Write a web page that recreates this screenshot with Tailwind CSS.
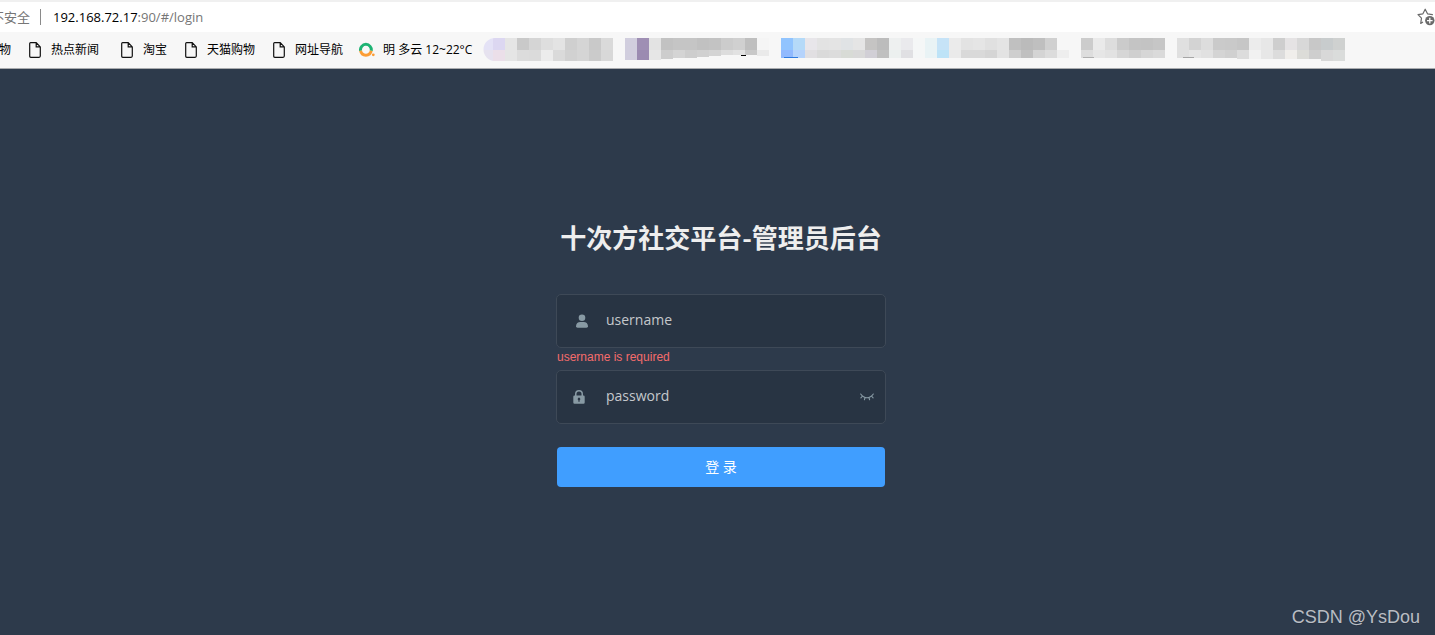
<!DOCTYPE html>
<html lang="zh-CN">

<head>
    <meta charset="UTF-8">
    <meta name="viewport" content="width=device-width, initial-scale=1.0">
    <script src="https://cdn.jsdelivr.net/npm/@tailwindcss/browser@4"></script>
    <title>十次方社交平台-管理员后台</title>
</head>

<body class="relative flex flex-col min-h-screen overflow-x-hidden bg-[#2d3a4b] font-['Open_Sans','Noto_Sans_CJK_SC',sans-serif]">

    <header>
        <!-- address bar -->
        <div class="flex items-center h-8 border-t-2 border-[#f0f0f0] bg-white text-[13px] leading-5 text-[#767676]">
            <span class="flex justify-end w-[30px] overflow-hidden whitespace-nowrap">不安全</span>
            <span class="w-px h-4 ml-[10px] mr-3 bg-[#8a8a8a]"></span>
            <a href="#/login" class="flex-1"><span class="text-black">192.168.72.17</span>:90/#/login</a>
            <button type="button" aria-label="收藏" class="shrink-0">
                <svg class="block w-[18px] h-[18px]" viewBox="0 0 18 18" fill="none">
                    <path d="M5.6 14.2 3.7 15.4 4.5 10.2 1 6.6l4.9-.8L8.2 1.2l2.3 4.6 4.9.8" stroke="#6a6a6a" stroke-width="1.2" stroke-linejoin="round" stroke-linecap="round" />
                    <circle cx="12.8" cy="12.6" r="4.7" fill="#6a6a6a" />
                    <path d="M12.8 9.8v5.6M10 12.6h5.6" stroke="#fff" stroke-width="1.3" />
                </svg>
            </button>
        </div>

        <!-- bookmarks -->
        <nav class="flex items-center h-[37px] gap-[18px] overflow-hidden border-b border-[#a9abae] bg-[#f7f7f7] text-xs text-black whitespace-nowrap">
            <a href="#" class="flex justify-end w-[11px] shrink-0">物</a>
            <a href="#" class="flex items-center gap-[10px] mr-1">
                <svg class="w-3 h-4" viewBox="0 0 12 16" fill="none" stroke="#111" stroke-width="1.2"><path d="M1.6.7h5.6l4.1 4.2v9.2q0 1.2-1.2 1.2H1.8Q.7 15.3.7 14.1V1.6Q.7.7 1.6.7zM7.2.7v4.2h4.1" /></svg>
                热点新闻
            </a>
            <a href="#" class="flex items-center gap-[10px]">
                <svg class="w-3 h-4" viewBox="0 0 12 16" fill="none" stroke="#111" stroke-width="1.2"><path d="M1.6.7h5.6l4.1 4.2v9.2q0 1.2-1.2 1.2H1.8Q.7 15.3.7 14.1V1.6Q.7.7 1.6.7zM7.2.7v4.2h4.1" /></svg>
                淘宝
            </a>
            <a href="#" class="flex items-center gap-[10px]">
                <svg class="w-3 h-4" viewBox="0 0 12 16" fill="none" stroke="#111" stroke-width="1.2"><path d="M1.6.7h5.6l4.1 4.2v9.2q0 1.2-1.2 1.2H1.8Q.7 15.3.7 14.1V1.6Q.7.7 1.6.7zM7.2.7v4.2h4.1" /></svg>
                天猫购物
            </a>
            <div class="flex items-center">
                <a href="#" class="flex items-center gap-[10px] mr-4">
                    <svg class="w-3 h-4" viewBox="0 0 12 16" fill="none" stroke="#111" stroke-width="1.2"><path d="M1.6.7h5.6l4.1 4.2v9.2q0 1.2-1.2 1.2H1.8Q.7 15.3.7 14.1V1.6Q.7.7 1.6.7zM7.2.7v4.2h4.1" /></svg>
                    网址导航
                </a>
                <a href="#" class="flex items-center gap-2 mr-[9px]">
                    <svg class="w-4 h-4" viewBox="0 0 16 16" fill="none" stroke-width="3">
                        <path d="M1.6 8.8A5.4 5.4 0 1 1 12.2 8.8" stroke="#1db373" />
                        <path d="M1.6 8.8A5.4 5.4 0 0 0 12.2 8.8" stroke="#fc9d35" />
                        <circle cx="14.3" cy="12.8" r="1.4" fill="#fc9d35" />
                    </svg>
                    明 多云 12~22°C
                </a>
                <svg id="mosaico" class="shrink-0 w-[864px] h-6" viewBox="0 0 864 24" shape-rendering="crispEdges"></svg>
            </div>
        </nav>
    </header>

    <main class="flex justify-center pl-[7px]">
        <form id="loginForm" class="flex flex-col w-[330px] pt-[148px]" novalidate>
            <h1 class="mb-[37px] text-center text-[26px] leading-10 font-bold text-[#eee] whitespace-nowrap font-['Noto_Sans_CJK_SC',sans-serif]">十次方社交平台-管理员后台</h1>

            <div class="flex items-center h-[54px] rounded-[5px] border border-[#3e4957] bg-[#283443]">
                <label for="username" class="w-[49px] pl-[19px]" aria-label="username">
                    <svg class="w-3 h-[14px]" viewBox="0 0 12 14" fill="#889aa4"><circle cx="6" cy="3.7" r="3.3" /><path d="M0 12.3C0 9.5 2 8 4.2 8h3.6C10 8 12 9.5 12 12.3q0 1.4-1.5 1.4h-9Q0 13.7 0 12.3z" /></svg>
                </label>
                <input id="username" type="text" placeholder="username" class="flex-1 min-w-0 h-full pb-1 bg-transparent text-sm text-white outline-none placeholder:text-[#c5c8cc]">
            </div>
            <p class="h-[22px] pt-[2px] pl-px font-['Liberation_Sans',sans-serif] text-xs leading-[14px] text-[#f56c6c]">username is required</p>

            <div class="flex items-center h-[54px] mb-[23px] rounded-[5px] border border-[#3e4957] bg-[#283443]">
                <label for="password" class="w-[49px] pl-4" aria-label="password">
                    <svg class="w-3 h-[14px]" viewBox="0 0 12 14" fill="#889aa4"><path fill-rule="evenodd" d="M2 5.5V4a4 4 0 0 1 8 0v1.5h.5q1.2 0 1.2 1.2v5.8q0 1.3-1.2 1.3h-9Q.3 13.8.3 12.5V6.7q0-1.2 1.2-1.2zM3.5 5.5h5V4a2.5 2.5 0 0 0-5 0zM5.4 10.2v1.6h1.2v-1.6a1.3 1.3 0 1 0-1.2 0z" /></svg>
                </label>
                <input id="password" type="password" placeholder="password" class="flex-1 min-w-0 h-full pb-1 bg-transparent text-sm text-white outline-none placeholder:text-[#c5c8cc]">
                <button id="verPassword" type="button" aria-label="显示密码" class="mr-[11px]">
                    <svg class="block w-[14px] h-[8px]" viewBox="0 0 14 8" fill="none" stroke="#889aa4" stroke-width="1.1" stroke-linecap="round"><path d="M.7 1Q3.3 4.7 7 4.7T13.3 1M2.4 3.2.9 4.8M5 4.5l-.6 2.3M9 4.5l.6 2.3M11.6 3.2l1.5 1.6" /></svg>
                </button>
            </div>

            <button type="submit" class="h-10 mx-px rounded bg-[#409eff] text-sm text-white cursor-pointer hover:bg-[#66b1ff]">登 录</button>
        </form>
    </main>

    <div class="absolute right-[15px] bottom-1.5 font-['Liberation_Sans',sans-serif] text-lg leading-6 text-[#b9bdc3] text-shadow-2xs">CSDN @YsDou</div>
</body>

<script>
    // one colour per 12px cell, "-" leaves the cell empty
    const filaArriba = "e4e2f6 dcd7f1 e5e5e5 c9c9c9 d5d5d5 dedede e3e3e3 cfcfcf d5d5d5 c9c9c9 dadada - d1cede 9f8fb4 e3e3e3 c2c2c2 c5c5c5 c5c5c5 c1c1c1 c3c3c3 cccccc d0d0d0 bfbfbf f5f5f5 - 91c4fe b5daf8 e8e6ea e3e3e3 e4e4e4 e0e3e5 e5e5e5 c5c4c3 bcbcbc eef0f0 eaeaed f5f7f7 e9f3f5 c6e3f7 ebebeb e3e3e3 e5e5e5 e0e0e0 e4e4e4 c0c0c0 bbbbbb bfbfbf d0d0d0 - - cccccc eaeaea dddddd cbcbcb c4c4c4 c3c3c3 c6c6c6 - e0e0e0 d3d3d3 dddddd cacaca c9c9c9 c6c6c6 ececec e7e7e7 cecece e5e3e4 d8d8d8 c8c8c8 c8cccd cfd1d0".split(" ");
    const filaAbajo = "e6e2ef ebdfe9 e5e5e5 dcdcdc dbdbdb ececec dadada d1d1d1 d5d5d5 cbcbcb d8d8d8 - d1cede 9b8bb1 e6e6e6 cdcdcd d4d4d4 cdcdcd d0d0d0 d4d4d4 dddddd e2e2e2 c8c8c8 eaeaea - 91b9fe b5d3fc e1dfe2 dadada dcdcdc d8dbd6 d9d9d9 d1cfd6 c0c0c0 ecf0ef e0e0e3 f5f7f7 e9f3f5 bde3f7 eaeaea d9d9d9 d9d9d9 d5d5d5 e3e3e3 cecece c0c0c0 d4d4d4 dcdcdc eeeeee - dddddd e6e6e6 e2e2e2 d6d6d6 cfcfcf d6d6d6 dadada - e0e0e0 e5e5e5 e1e1e1 d4d4d4 d0d0d0 dcdcdc f1f1f1 e7e7e7 dcdcdc f0eeeb dcdcd8 cecece d8d8d8 dadcdb".split(" ");
    const altos = [11, 11, 11, 11, 11, 11, 11, 11, 11, 11, 11, 0, 10, 10, 10, 9, 8, 8, 7, 6, 5, 5, 5, 6, 0];

    function pintarCelda(svg, x, y, ancho, alto, color) {
        const rect = document.createElementNS("http://www.w3.org/2000/svg", "rect");
        rect.setAttribute("x", x);
        rect.setAttribute("y", y);
        rect.setAttribute("width", ancho);
        rect.setAttribute("height", alto);
        rect.setAttribute("fill", color);
        svg.appendChild(rect);
    }

    function cargarMosaico() {
        const svg = document.getElementById("mosaico");

        filaArriba.forEach((color, i) => {
            if (color !== "-") pintarCelda(svg, i * 12, 0, 12, 12, "#" + color);
        });
        filaAbajo.forEach((color, i) => {
            const alto = altos[i] ?? (i > 69 ? 11 : i > 62 ? 9 : 8);
            if (color !== "-") pintarCelda(svg, i * 12, 12, 12, alto, "#" + color);
        });

        // rounded left end
        const esquina = document.createElementNS("http://www.w3.org/2000/svg", "path");
        esquina.setAttribute("d", "M0 0H14A11.5 11.5 0 0 0 14 23V24H0z");
        esquina.setAttribute("fill", "#f7f7f7");
        esquina.setAttribute("shape-rendering", "auto");
        svg.appendChild(esquina);

        pintarCelda(svg, 260, 17, 5, 1, "#000");
        pintarCelda(svg, 303, 19, 14, 1, "#2f7be0");
        pintarCelda(svg, 602, 19, 11, 1, "#b0b0b0");
        pintarCelda(svg, 702, 19, 11, 1, "#a5a5a5");
    }

    document.getElementById("verPassword").addEventListener("click", function () {
        const password = document.getElementById("password");
        password.type = password.type === "password" ? "text" : "password";
    });

    document.getElementById("loginForm").addEventListener("submit", function (event) {
        event.preventDefault();
    });

    cargarMosaico();
</script>

</html>
